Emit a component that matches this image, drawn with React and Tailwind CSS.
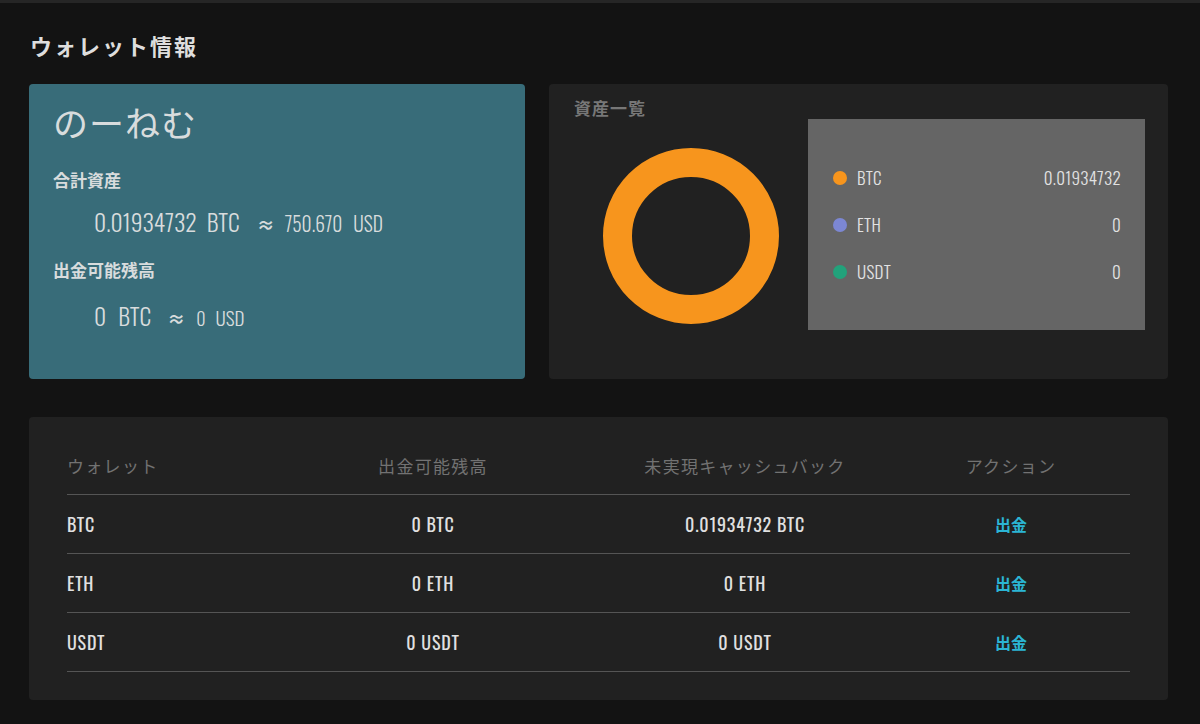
import React from "react";

const oswald = "font-['Oswald','Noto_Sans_CJK_JP',sans-serif]";
const cjk = "font-['Noto_Sans_CJK_JP','Noto_Sans',sans-serif]";
const approx = "font-['Noto_Sans','Noto_Sans_CJK_JP',sans-serif]";

const assets = [
  { name: "BTC", amount: "0.01934732", color: "bg-[#f7951d]" },
  { name: "ETH", amount: "0", color: "bg-[#7c87d3]" },
  { name: "USDT", amount: "0", color: "bg-[#22a27b]" },
];

const wallets = [
  { name: "BTC", available: "0 BTC", cashback: "0.01934732 BTC" },
  { name: "ETH", available: "0 ETH", cashback: "0 ETH" },
  { name: "USDT", available: "0 USDT", cashback: "0 USDT" },
];

function Donut() {
  // only BTC has a balance, so the ring is a full circle
  return (
    <svg width="176" height="176" viewBox="0 0 176 176">
      <circle cx="88" cy="88" r="73.5" fill="none" stroke="#f7951d" strokeWidth="29" />
    </svg>
  );
}

export default function App() {
  return (
    <div className={`min-h-[724px] w-[1200px] bg-[#131313] border-t-[3px] border-[#262626] ${cjk}`}>
      <div className="ml-[29px] w-[1139px] pt-[27px]">
        <h1 className="pl-[1px] text-[22px] leading-[30px] font-bold tracking-[2px] text-[#dedede]">
          ウォレット情報
        </h1>

        <div className="mt-[24px] flex gap-[24px]">
          {/* balance card */}
          <div className="h-[295px] w-[496px] rounded-[4px] bg-[#386c79] pl-[24px] pt-[16px] text-[#d8dcdd]">
            <div className="text-[35px] leading-[44px] tracking-[1px]">のーねむ</div>
            <div className="mt-[24px] text-[17px] leading-[24px] font-semibold">合計資産</div>
            <div className={`mt-[14px] ml-[41px] flex items-baseline leading-[32px] font-light ${oswald}`}>
              <span className="text-[23.5px]">0.01934732</span>
              <span className="ml-[10px] text-[23.5px]">BTC</span>
              <span className={`ml-[17px] text-[18px] font-semibold ${approx}`}>≈</span>
              <span className="ml-[10px] text-[19.5px]">750.670</span>
              <span className="ml-[11px] text-[19.5px]">USD</span>
            </div>
            <div className="mt-[17px] text-[17px] leading-[24px] font-semibold">出金可能残高</div>
            <div className={`mt-[18px] ml-[41px] flex items-baseline leading-[32px] font-light ${oswald}`}>
              <span className="text-[23.5px]">0</span>
              <span className="ml-[12px] text-[23.5px]">BTC</span>
              <span className={`ml-[16px] text-[18px] font-semibold ${approx}`}>≈</span>
              <span className="ml-[11px] text-[18px]">0</span>
              <span className="ml-[10px] text-[19px]">USD</span>
            </div>
          </div>

          {/* asset overview */}
          <div className="h-[295px] flex-1 rounded-[4px] bg-[#212121] pl-[25px] pr-[23px] pt-[13px]">
            <div className="text-[17px] leading-[22px] tracking-[1px] font-semibold text-[#777777]">資産一覧</div>
            <div className="flex">
              <div className="flex w-[234px] justify-center pt-[29px]">
                <Donut />
              </div>
              <div className="flex h-[211px] w-[337px] flex-col justify-center gap-[23px] bg-[#656565] pl-[25px] pr-[24px]">
                {assets.map((a) => (
                  <div key={a.name} className={`flex h-[24px] items-center text-[17px] tracking-[0.3px] font-light text-[#e2e2e2] ${oswald}`}>
                    <span className={`h-[14px] w-[14px] rounded-full ${a.color}`} />
                    <span className="ml-[10px]">{a.name}</span>
                    <span className="ml-auto">{a.amount}</span>
                  </div>
                ))}
              </div>
            </div>
          </div>
        </div>

        {/* wallet table */}
        <div className="mt-[38px] rounded-[4px] bg-[#212121] px-[38px] pt-[37px] pb-[28px]">
          <div className="grid grid-cols-[200px_332px_292px_240px] border-b border-[#555555] pb-[16px] text-[17px] leading-[24px] tracking-[1.3px] text-[#727272]">
            <div>ウォレット</div>
            <div className="text-center">出金可能残高</div>
            <div className="text-center">未実現キャッシュバック</div>
            <div className="text-center">アクション</div>
          </div>
          {wallets.map((w) => (
            <div
              key={w.name}
              className="grid h-[59px] grid-cols-[200px_332px_292px_240px] items-center border-b border-[#555555] text-[18px] text-[#e0e0e0]"
            >
              <div className={`tracking-[0.8px] ${oswald}`}>{w.name}</div>
              <div className={`text-center tracking-[0.8px] ${oswald}`}>{w.available}</div>
              <div className={`text-center tracking-[0.8px] ${oswald}`}>{w.cashback}</div>
              <div className="text-center text-[16px] font-bold text-[#2bb5d4]">出金</div>
            </div>
          ))}
        </div>
      </div>
    </div>
  );
}
